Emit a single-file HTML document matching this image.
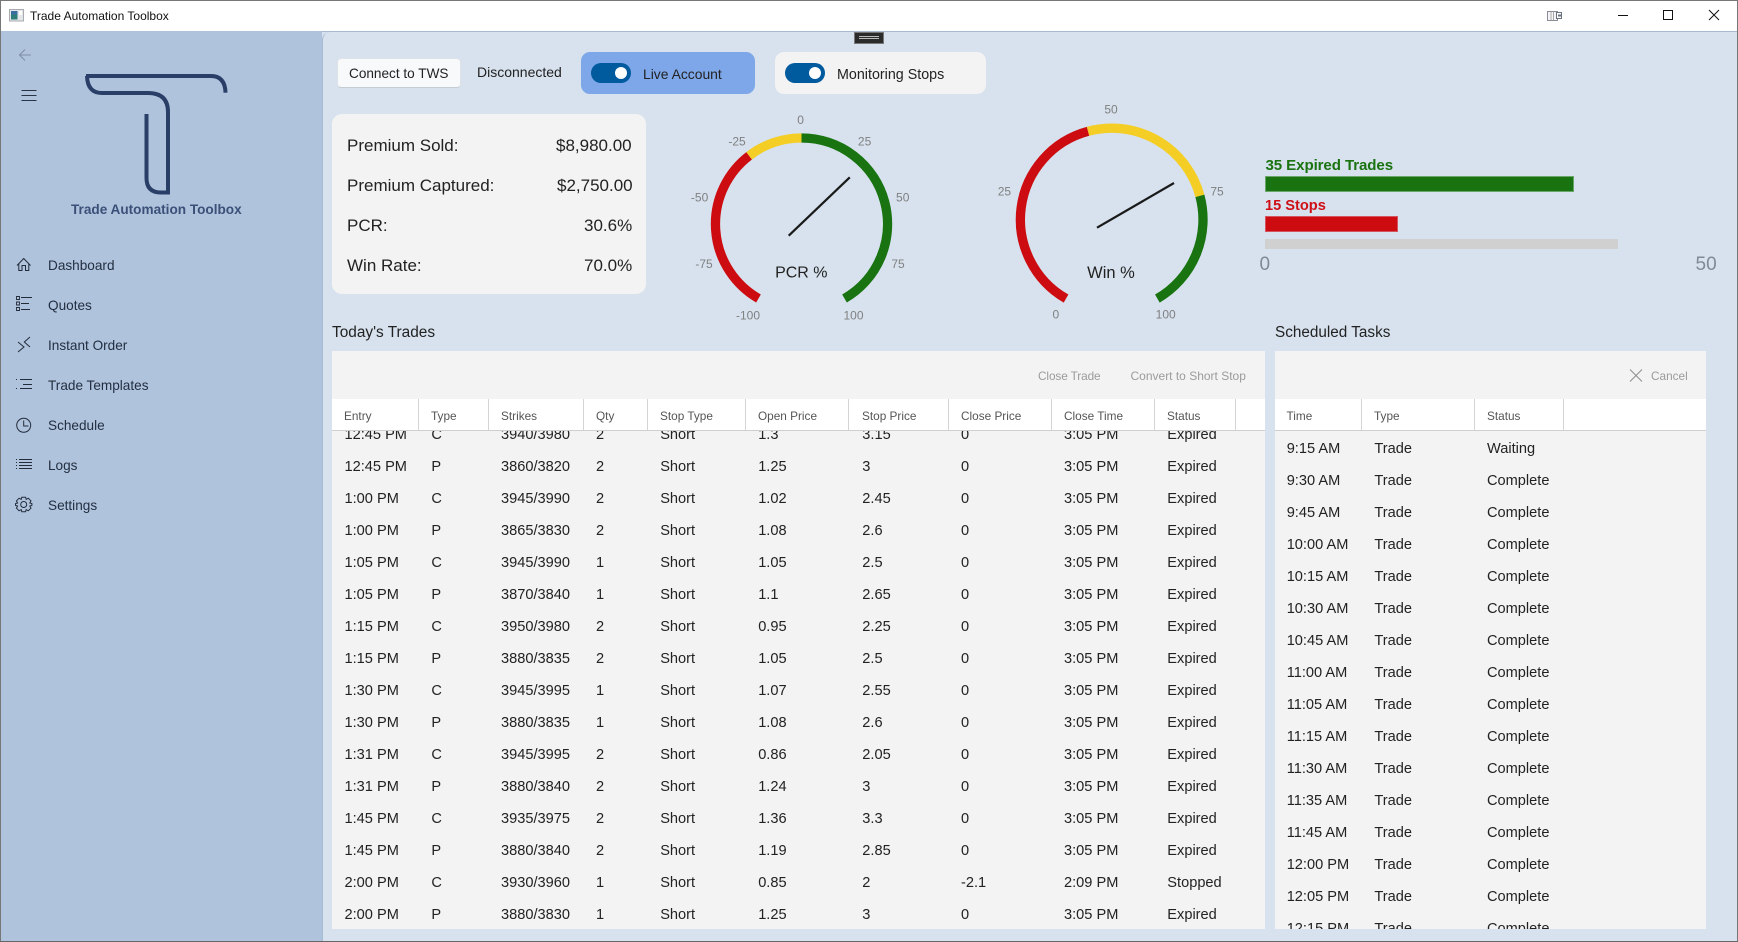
<!DOCTYPE html>
<html><head><meta charset="utf-8"><title>Trade Automation Toolbox</title>
<style>
html,body{margin:0;padding:0;width:1738px;height:942px;overflow:hidden;background:#D7E2EE;font-family:"Liberation Sans",sans-serif;color:#1c1c1c}
.a{position:absolute}
.t{position:absolute;white-space:nowrap;line-height:20px}
.nav{font-size:13.6px;color:#232f40;left:48px}
.st{font-size:17px;color:#222;left:347px}
.sv{font-size:17px;color:#222;right:1107px}
.h{font-size:11.8px;color:#555;top:406px}
.sep{position:absolute;top:399px;width:1px;height:31px;background:#d4d4d4}
.panel{position:absolute;background:#F3F3F3;top:351px;height:578px}
.hdr{position:absolute;background:#fff;top:399px;height:31px;border-bottom:1px solid #cfcfcf}
.body{position:absolute;top:431px;height:498px;overflow:hidden;font-size:14.6px;color:#222}
.r{position:relative;height:32px;line-height:32px;white-space:nowrap}
.r span{position:absolute;top:0}
#t1 .r span:nth-child(1){left:12.5px}#t1 .r span:nth-child(2){left:99.4px}#t1 .r span:nth-child(3){left:169px}#t1 .r span:nth-child(4){left:264px}#t1 .r span:nth-child(5){left:328.2px}#t1 .r span:nth-child(6){left:426.2px}#t1 .r span:nth-child(7){left:530.3px}#t1 .r span:nth-child(8){left:629px}#t1 .r span:nth-child(9){left:732px}#t1 .r span:nth-child(10){left:835.3px}
#t2 .r span:nth-child(1){left:11.7px}#t2 .r span:nth-child(2){left:99.4px}#t2 .r span:nth-child(3){left:212px}
.btn{font-size:11.8px;color:#9b9b9b;top:366px}
svg text{font-family:"Liberation Sans",sans-serif}
.gl{font-size:12px;fill:#808080;text-anchor:middle;dominant-baseline:central}
</style></head><body>
<!-- title bar -->
<div class="a" style="left:0;top:0;width:1738px;height:31px;background:#fff;border-top:1px solid #777;box-sizing:border-box"></div>
<div class="a" style="left:0;top:31px;width:1738px;height:1px;background:#a9b9cf"></div>
<div class="t" style="left:30px;top:6px;font-size:12px;color:#111">Trade Automation Toolbox</div>
<!-- sidebar -->
<div class="a" style="left:0;top:31px;width:322px;height:911px;background:#AFC3DD"></div>
<div class="a" style="left:322px;top:32px;width:1415px;height:909px;background:#D7E2EE;border-top-left-radius:8px;border-left:1px solid #a6bbd6;box-sizing:border-box"></div>
<div class="a" style="left:0;top:0;width:1px;height:942px;background:#777"></div>
<div class="a" style="left:1737px;top:0;width:1px;height:942px;background:#777"></div>
<div class="a" style="left:0;top:941px;width:1738px;height:1px;background:#666"></div>

<div class="t" style="left:71px;top:199.5px;font-size:13.6px;font-weight:bold;color:#3b5078">Trade Automation Toolbox</div>
<div class="t nav" style="top:256px">Dashboard</div>
<div class="t nav" style="top:296px">Quotes</div>
<div class="t nav" style="top:336px">Instant Order</div>
<div class="t nav" style="top:376px">Trade Templates</div>
<div class="t nav" style="top:416px">Schedule</div>
<div class="t nav" style="top:456px">Logs</div>
<div class="t nav" style="top:496px">Settings</div>

<!-- top controls -->
<div class="a" style="left:337px;top:58px;width:124px;height:30px;background:#f8f9fb;border:1px solid #dfe3e8;border-bottom-color:#c6ccd3;border-radius:4px;box-sizing:border-box"></div>
<div class="t" style="left:349px;top:64px;font-size:13.6px;color:#222">Connect to TWS</div>
<div class="t" style="left:477px;top:62px;font-size:14px;color:#222">Disconnected</div>
<div class="a" style="left:581px;top:52px;width:174px;height:42px;background:#7DA7E8;border-radius:9px"></div>
<div class="a" style="left:591px;top:63px;width:40px;height:20px;background:#005A9E;border-radius:10px"></div>
<div class="a" style="left:615px;top:67px;width:12px;height:12px;background:#fff;border-radius:50%"></div>
<div class="t" style="left:643px;top:64px;font-size:13.9px;color:#222">Live Account</div>
<div class="a" style="left:775px;top:52px;width:211px;height:42px;background:#F3F3F3;border-radius:9px"></div>
<div class="a" style="left:785px;top:63px;width:40px;height:20px;background:#005A9E;border-radius:10px"></div>
<div class="a" style="left:809px;top:67px;width:12px;height:12px;background:#fff;border-radius:50%"></div>
<div class="t" style="left:837px;top:65px;font-size:14.3px;color:#222">Monitoring Stops</div>
<div class="a" style="left:854px;top:32px;width:30px;height:12px;background:#2b2b2b;border:1px solid #777;box-sizing:border-box"></div>
<div class="a" style="left:859px;top:36px;width:20px;height:1px;background:#bbb"></div>
<div class="a" style="left:859px;top:38px;width:20px;height:1px;background:#bbb"></div>

<!-- stats -->
<div class="a" style="left:332px;top:114px;width:314px;height:180px;background:#F3F3F3;border-radius:10px"></div>
<div class="t st" style="top:136px">Premium Sold:</div><div class="t sv" style="top:136px;left:556px">$8,980.00</div>
<div class="t st" style="top:176px">Premium Captured:</div><div class="t sv" style="top:176px;left:557px">$2,750.00</div>
<div class="t st" style="top:216px">PCR:</div><div class="t sv" style="top:216px;left:584px">30.6%</div>
<div class="t st" style="top:256px">Win Rate:</div><div class="t sv" style="top:256px;left:584px">70.0%</div>

<div class="t" style="left:332px;top:323px;font-size:15.4px;color:#222">Today's Trades</div>
<div class="t" style="left:1275px;top:323px;font-size:15.3px;color:#222">Scheduled Tasks</div>

<!-- bars -->
<div class="t" style="left:1265.5px;top:156px;font-size:15.1px;font-weight:bold;color:#1a7310;letter-spacing:-.1px">35 Expired Trades</div>
<div class="a" style="left:1265px;top:176px;width:309px;height:16px;background:#187310;border:1px solid #6aa56a;box-sizing:border-box"></div>
<div class="t" style="left:1265px;top:195.5px;font-size:14.6px;font-weight:bold;color:#cf0f16">15 Stops</div>
<div class="a" style="left:1265px;top:216px;width:133px;height:16px;background:#CC0C10;border:1px solid #d4545f;box-sizing:border-box"></div>
<div class="a" style="left:1265px;top:239px;width:353px;height:10px;background:#D0D0D0"></div>
<div class="t" style="left:1259.5px;top:255px;font-size:19px;color:#808a94">0</div>
<div class="t" style="left:1695.5px;top:255px;font-size:19px;color:#808a94">50</div>

<!-- table 1 -->
<div class="panel" style="left:332px;width:933px"></div>
<div class="hdr" style="left:332px;width:933px"></div>
<div class="t btn" style="left:1038px;letter-spacing:-.1px">Close Trade</div>
<div class="t btn" style="left:1130.5px;font-size:12px">Convert to Short Stop</div>
<div class="sep" style="left:418px"></div><div class="sep" style="left:488px"></div><div class="sep" style="left:583px"></div><div class="sep" style="left:647px"></div><div class="sep" style="left:745px"></div><div class="sep" style="left:848px"></div><div class="sep" style="left:948px"></div><div class="sep" style="left:1051px"></div><div class="sep" style="left:1154px"></div><div class="sep" style="left:1234.5px"></div>
<div class="t h" style="left:344px">Entry</div><div class="t h" style="left:431px">Type</div><div class="t h" style="left:501px">Strikes</div><div class="t h" style="left:596px">Qty</div><div class="t h" style="left:660px">Stop Type</div><div class="t h" style="left:758px">Open Price</div><div class="t h" style="left:862px">Stop Price</div><div class="t h" style="left:961px">Close Price</div><div class="t h" style="left:1064px">Close Time</div><div class="t h" style="left:1167px">Status</div>
<div class="body" id="t1" style="left:332px;width:933px">
<div style="height:0;margin-top:-12px"></div>
<div class="r"><span>12:45 PM</span><span>C</span><span>3940/3980</span><span>2</span><span>Short</span><span>1.3</span><span>3.15</span><span>0</span><span>3:05 PM</span><span>Expired</span></div>
<div class="r"><span>12:45 PM</span><span>P</span><span>3860/3820</span><span>2</span><span>Short</span><span>1.25</span><span>3</span><span>0</span><span>3:05 PM</span><span>Expired</span></div>
<div class="r"><span>1:00 PM</span><span>C</span><span>3945/3990</span><span>2</span><span>Short</span><span>1.02</span><span>2.45</span><span>0</span><span>3:05 PM</span><span>Expired</span></div>
<div class="r"><span>1:00 PM</span><span>P</span><span>3865/3830</span><span>2</span><span>Short</span><span>1.08</span><span>2.6</span><span>0</span><span>3:05 PM</span><span>Expired</span></div>
<div class="r"><span>1:05 PM</span><span>C</span><span>3945/3990</span><span>1</span><span>Short</span><span>1.05</span><span>2.5</span><span>0</span><span>3:05 PM</span><span>Expired</span></div>
<div class="r"><span>1:05 PM</span><span>P</span><span>3870/3840</span><span>1</span><span>Short</span><span>1.1</span><span>2.65</span><span>0</span><span>3:05 PM</span><span>Expired</span></div>
<div class="r"><span>1:15 PM</span><span>C</span><span>3950/3980</span><span>2</span><span>Short</span><span>0.95</span><span>2.25</span><span>0</span><span>3:05 PM</span><span>Expired</span></div>
<div class="r"><span>1:15 PM</span><span>P</span><span>3880/3835</span><span>2</span><span>Short</span><span>1.05</span><span>2.5</span><span>0</span><span>3:05 PM</span><span>Expired</span></div>
<div class="r"><span>1:30 PM</span><span>C</span><span>3945/3995</span><span>1</span><span>Short</span><span>1.07</span><span>2.55</span><span>0</span><span>3:05 PM</span><span>Expired</span></div>
<div class="r"><span>1:30 PM</span><span>P</span><span>3880/3835</span><span>1</span><span>Short</span><span>1.08</span><span>2.6</span><span>0</span><span>3:05 PM</span><span>Expired</span></div>
<div class="r"><span>1:31 PM</span><span>C</span><span>3945/3995</span><span>2</span><span>Short</span><span>0.86</span><span>2.05</span><span>0</span><span>3:05 PM</span><span>Expired</span></div>
<div class="r"><span>1:31 PM</span><span>P</span><span>3880/3840</span><span>2</span><span>Short</span><span>1.24</span><span>3</span><span>0</span><span>3:05 PM</span><span>Expired</span></div>
<div class="r"><span>1:45 PM</span><span>C</span><span>3935/3975</span><span>2</span><span>Short</span><span>1.36</span><span>3.3</span><span>0</span><span>3:05 PM</span><span>Expired</span></div>
<div class="r"><span>1:45 PM</span><span>P</span><span>3880/3840</span><span>2</span><span>Short</span><span>1.19</span><span>2.85</span><span>0</span><span>3:05 PM</span><span>Expired</span></div>
<div class="r"><span>2:00 PM</span><span>C</span><span>3930/3960</span><span>1</span><span>Short</span><span>0.85</span><span>2</span><span>-2.1</span><span>2:09 PM</span><span>Stopped</span></div>
<div class="r"><span>2:00 PM</span><span>P</span><span>3880/3830</span><span>1</span><span>Short</span><span>1.25</span><span>3</span><span>0</span><span>3:05 PM</span><span>Expired</span></div>
</div>

<!-- table 2 -->
<div class="panel" style="left:1275px;width:431px"></div>
<div class="hdr" style="left:1275px;width:431px"></div>
<div class="t btn" style="left:1651px">Cancel</div>
<div class="sep" style="left:1361px"></div><div class="sep" style="left:1474px"></div><div class="sep" style="left:1563px"></div>
<div class="t h" style="left:1286.5px">Time</div><div class="t h" style="left:1374px">Type</div><div class="t h" style="left:1487px">Status</div>
<div class="body" id="t2" style="left:1275px;width:431px">
<div style="height:2px"></div>
<div class="r"><span>9:15 AM</span><span>Trade</span><span>Waiting</span></div>
<div class="r"><span>9:30 AM</span><span>Trade</span><span>Complete</span></div>
<div class="r"><span>9:45 AM</span><span>Trade</span><span>Complete</span></div>
<div class="r"><span>10:00 AM</span><span>Trade</span><span>Complete</span></div>
<div class="r"><span>10:15 AM</span><span>Trade</span><span>Complete</span></div>
<div class="r"><span>10:30 AM</span><span>Trade</span><span>Complete</span></div>
<div class="r"><span>10:45 AM</span><span>Trade</span><span>Complete</span></div>
<div class="r"><span>11:00 AM</span><span>Trade</span><span>Complete</span></div>
<div class="r"><span>11:05 AM</span><span>Trade</span><span>Complete</span></div>
<div class="r"><span>11:15 AM</span><span>Trade</span><span>Complete</span></div>
<div class="r"><span>11:30 AM</span><span>Trade</span><span>Complete</span></div>
<div class="r"><span>11:35 AM</span><span>Trade</span><span>Complete</span></div>
<div class="r"><span>11:45 AM</span><span>Trade</span><span>Complete</span></div>
<div class="r"><span>12:00 PM</span><span>Trade</span><span>Complete</span></div>
<div class="r"><span>12:05 PM</span><span>Trade</span><span>Complete</span></div>
<div class="r"><span>12:15 PM</span><span>Trade</span><span>Complete</span></div>
</div>

<svg class="a" style="left:0;top:0" width="1738" height="942" viewBox="0 0 1738 942" fill="none">
<!-- title bar icon -->
<rect x="9.5" y="9.5" width="14" height="11.5" fill="#e4e6e8" stroke="#a8abb0"/>
<rect x="11" y="11" width="6.5" height="8.5" fill="#2f7d78"/><rect x="11" y="11" width="6.5" height="3.5" fill="#3a6ea0"/>
<rect x="19" y="11" width="3" height="4" fill="#fff"/>
<!-- window controls -->
<rect x="1547.5" y="11.5" width="10" height="9" stroke="#8a8e99" fill="#f4f4f6"/><path d="M1551 12V20M1553.5 12V20" stroke="#aaa"/>
<rect x="1556.5" y="12.5" width="5" height="6" stroke="#6d7280" fill="#fff"/><rect x="1558" y="14.5" width="3" height="2" fill="#6d7280"/>
<path d="M1618 15.5H1628" stroke="#111" stroke-width="1"/>
<rect x="1663.5" y="10.5" width="9" height="9" stroke="#111" stroke-width="1"/>
<path d="M1709 10L1719 20M1719 10L1709 20" stroke="#111" stroke-width="1"/>
<!-- back / hamburger -->
<path d="M31 55H20M25 49.5L19.5 55L25 60.5" stroke="#7f8da8" stroke-width="1"/>
<path d="M21.5 90.5H36.5M21.5 95.5H36.5M21.5 100.5H36.5" stroke="#2a3344" stroke-width="1"/>
<!-- logo -->
<path d="M86 76H211Q225 76 225.5 92.7M87 76Q87.5 93 102 93H148Q168 93 168 112V192.5H160Q146.5 192 146.5 178V114" stroke="#2a3f68" stroke-width="4"/>
<!-- nav icons -->
<g stroke="#232c3a" stroke-width="1">
<path d="M17 265.5L23.7 258.5L30.5 265.5M18.8 264V270.5H22V265.5H25.5V270.5H28.8V264"/>
<path d="M21 297.5H32M21 303.5H29M21 309.5H30"/>
<path d="M16.5 296.5h3v3h-3zM16.5 302h3v3h-3zM16.5 307.5h3v3h-3z" stroke-width=".9"/>
<path d="M18 342L24 347L18 352M30 337L24.3 342L30 347"/>
<path d="M20 379.5H32M23 384.5H32M20 388.5H32M16 379.5H17M16 388.5H17"/>
<circle cx="23.7" cy="425.3" r="7"/><path d="M23.7 420.5V426H28.5"/>
<path d="M19 459.5H32M19 462.5H32M19 465.5H32M19 468.5H32M16 459.5H17M16 462.5H17M16 465.5H17M16 468.5H17"/>
<circle cx="23.7" cy="504.5" r="3"/>
<path d="M21.8 497.2H25.6L26.2 499.4L28.3 498.2L31 500.9L29.8 503L31.9 503.6V505.4L29.8 506L31 508.1L28.3 510.8L26.2 509.6L25.6 511.8H21.8L21.2 509.6L19.1 510.8L16.4 508.1L17.6 506L15.5 505.4V503.6L17.6 503L16.4 500.9L19.1 498.2L21.2 499.4Z"/>
</g>
<!-- cancel x -->
<path d="M1630 369.5L1642 381.5M1642 369.5L1630 381.5" stroke="#8d8d8d" stroke-width="1"/>
<!-- gauge 1 -->
<g stroke-width="9.3">
<path d="M758.5 298.5A86 86 0 0 1 749.14 155.77" stroke="#CC0C10"/>
<path d="M749.14 155.77A86 86 0 0 1 801.5 138" stroke="#F4CE25"/>
<path d="M801.5 138A86 86 0 0 1 844.5 298.5" stroke="#187310"/>
</g>
<path d="M788.7 235.7L849.8 177.3" stroke="#1a1a1a" stroke-width="2.2"/>
<text class="gl" x="800.6" y="120">0</text><text class="gl" x="864.6" y="141.7">25</text><text class="gl" x="902.7" y="197.3">50</text><text class="gl" x="898" y="264">75</text><text class="gl" x="853.5" y="315.7">100</text><text class="gl" x="748" y="315.7">-100</text><text class="gl" x="704" y="264">-75</text><text class="gl" x="699.6" y="197.3">-50</text><text class="gl" x="737" y="141.7">-25</text>
<text x="801.3" y="273" text-anchor="middle" dominant-baseline="central" font-size="16" fill="#222">PCR %</text>
<!-- gauge 2 -->
<g stroke-width="9.3">
<path d="M1066.05 298.57A91.3 91.3 0 0 1 1088.07 131.31" stroke="#CC0C10"/>
<path d="M1088.07 131.31A91.3 91.3 0 0 1 1199.89 195.87" stroke="#F4CE25"/>
<path d="M1199.89 195.87A91.3 91.3 0 0 1 1157.35 298.57" stroke="#187310"/>
</g>
<path d="M1097 227.7L1174 183" stroke="#1a1a1a" stroke-width="2.2"/>
<text class="gl" x="1111" y="109.7">50</text><text class="gl" x="1004.4" y="191.7">25</text><text class="gl" x="1217" y="191.7">75</text><text class="gl" x="1055.9" y="314.7">0</text><text class="gl" x="1165.7" y="314.7">100</text>
<text x="1111" y="273" text-anchor="middle" dominant-baseline="central" font-size="16.5" fill="#222">Win %</text>
</svg>
</body></html>
